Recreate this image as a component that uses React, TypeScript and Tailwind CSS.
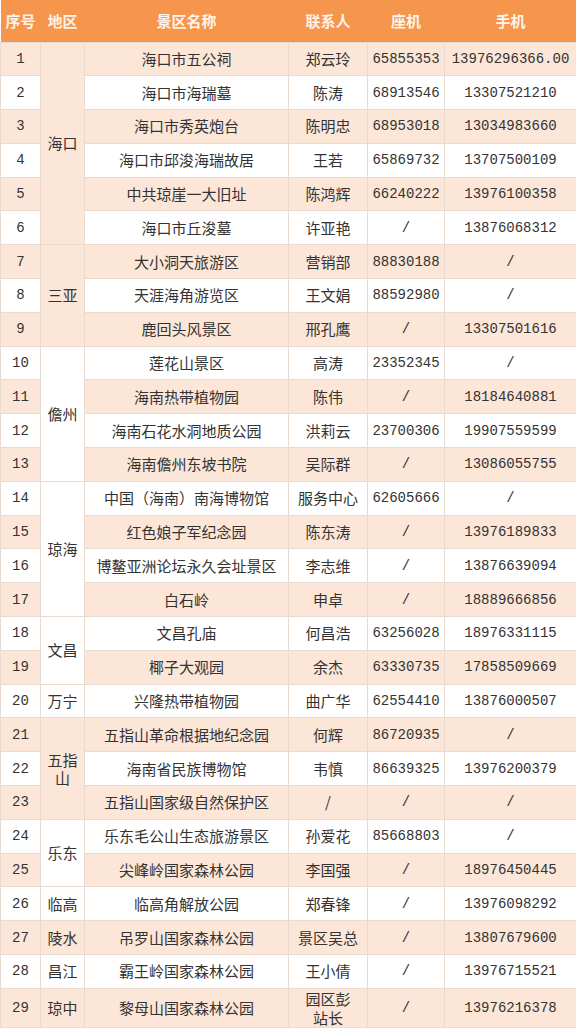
type Row = {
  no: number;
  region?: string;
  span?: number;
  name: string;
  contact: string;
  phone: string;
  mobile: string;
};

const rows: Row[] = [
  { no: 1, region: "海口", span: 6, name: "海口市五公祠", contact: "郑云玲", phone: "65855353", mobile: "13976296366.00" },
  { no: 2, name: "海口市海瑞墓", contact: "陈涛", phone: "68913546", mobile: "13307521210" },
  { no: 3, name: "海口市秀英炮台", contact: "陈明忠", phone: "68953018", mobile: "13034983660" },
  { no: 4, name: "海口市邱浚海瑞故居", contact: "王若", phone: "65869732", mobile: "13707500109" },
  { no: 5, name: "中共琼崖一大旧址", contact: "陈鸿辉", phone: "66240222", mobile: "13976100358" },
  { no: 6, name: "海口市丘浚墓", contact: "许亚艳", phone: "/", mobile: "13876068312" },
  { no: 7, region: "三亚", span: 3, name: "大小洞天旅游区", contact: "营销部", phone: "88830188", mobile: "/" },
  { no: 8, name: "天涯海角游览区", contact: "王文娟", phone: "88592980", mobile: "/" },
  { no: 9, name: "鹿回头风景区", contact: "邢孔鹰", phone: "/", mobile: "13307501616" },
  { no: 10, region: "儋州", span: 4, name: "莲花山景区", contact: "高涛", phone: "23352345", mobile: "/" },
  { no: 11, name: "海南热带植物园", contact: "陈伟", phone: "/", mobile: "18184640881" },
  { no: 12, name: "海南石花水洞地质公园", contact: "洪莉云", phone: "23700306", mobile: "19907559599" },
  { no: 13, name: "海南儋州东坡书院", contact: "吴际群", phone: "/", mobile: "13086055755" },
  { no: 14, region: "琼海", span: 4, name: "中国（海南）南海博物馆", contact: "服务中心", phone: "62605666", mobile: "/" },
  { no: 15, name: "红色娘子军纪念园", contact: "陈东涛", phone: "/", mobile: "13976189833" },
  { no: 16, name: "博鳌亚洲论坛永久会址景区", contact: "李志维", phone: "/", mobile: "13876639094" },
  { no: 17, name: "白石岭", contact: "申卓", phone: "/", mobile: "18889666856" },
  { no: 18, region: "文昌", span: 2, name: "文昌孔庙", contact: "何昌浩", phone: "63256028", mobile: "18976331115" },
  { no: 19, name: "椰子大观园", contact: "余杰", phone: "63330735", mobile: "17858509669" },
  { no: 20, region: "万宁", span: 1, name: "兴隆热带植物园", contact: "曲广华", phone: "62554410", mobile: "13876000507" },
  { no: 21, region: "五指山", span: 3, name: "五指山革命根据地纪念园", contact: "何辉", phone: "86720935", mobile: "/" },
  { no: 22, name: "海南省民族博物馆", contact: "韦慎", phone: "86639325", mobile: "13976200379" },
  { no: 23, name: "五指山国家级自然保护区", contact: "/", phone: "/", mobile: "/" },
  { no: 24, region: "乐东", span: 2, name: "乐东毛公山生态旅游景区", contact: "孙爱花", phone: "85668803", mobile: "/" },
  { no: 25, name: "尖峰岭国家森林公园", contact: "李国强", phone: "/", mobile: "18976450445" },
  { no: 26, region: "临高", span: 1, name: "临高角解放公园", contact: "郑春锋", phone: "/", mobile: "13976098292" },
  { no: 27, region: "陵水", span: 1, name: "吊罗山国家森林公园", contact: "景区吴总", phone: "/", mobile: "13807679600" },
  { no: 28, region: "昌江", span: 1, name: "霸王岭国家森林公园", contact: "王小倩", phone: "/", mobile: "13976715521" },
  { no: 29, region: "琼中", span: 1, name: "黎母山国家森林公园", contact: "园区彭站长", phone: "/", mobile: "13976216378" },
];

const cjk = "font-['Noto_Sans_CJK_SC',sans-serif]";
const mono = "font-['Liberation_Mono','Noto_Sans_CJK_SC',monospace]";
const cell = "border border-[#eadbd0] text-center align-middle h-[33.8px] p-0 leading-[18px]";

export default function App() {
  return (
    <div className={`w-[576px] bg-white text-[#333] ${cjk}`}>
      <table className="w-[576px] table-fixed border-collapse">
        <colgroup>
          <col className="w-[40px]" />
          <col className="w-[44px]" />
          <col className="w-[204px]" />
          <col className="w-[79px]" />
          <col className="w-[77px]" />
          <col className="w-[132px]" />
        </colgroup>
        <thead>
          <tr className="bg-[#f5964c] text-[#fff3ea] text-[15px] font-bold">
            {["序号", "地区", "景区名称", "联系人", "座机", "手机"].map((h) => (
              <th key={h} className="h-[42px] p-0 text-center border-b border-[#eadbd0]">
                {h}
              </th>
            ))}
          </tr>
        </thead>
        <tbody>
          {rows.map((r) => {
            const bg = r.no % 2 === 1 ? "bg-[#fce6d8]" : "bg-white";
            return (
              <tr key={r.no} className={bg}>
                <td className={`${cell} ${mono} text-[14px]`}>{r.no}</td>
                {r.region && (
                  <td rowSpan={r.span} className={`${cell} text-[15px] px-[4px]`}>
                    {r.region}
                  </td>
                )}
                <td className={`${cell} text-[15px]`}>{r.name}</td>
                <td className={`${cell} text-[15px]`}>
                  {r.contact === "园区彭站长" ? (
                    <span className="block leading-[19px]">
                      园区彭
                      <br />
                      站长
                    </span>
                  ) : (
                    r.contact
                  )}
                </td>
                <td className={`${cell} ${mono} text-[14px]`}>{r.phone}</td>
                <td className={`${cell} ${mono} text-[14px]`}>{r.mobile}</td>
              </tr>
            );
          })}
        </tbody>
      </table>
    </div>
  );
}
